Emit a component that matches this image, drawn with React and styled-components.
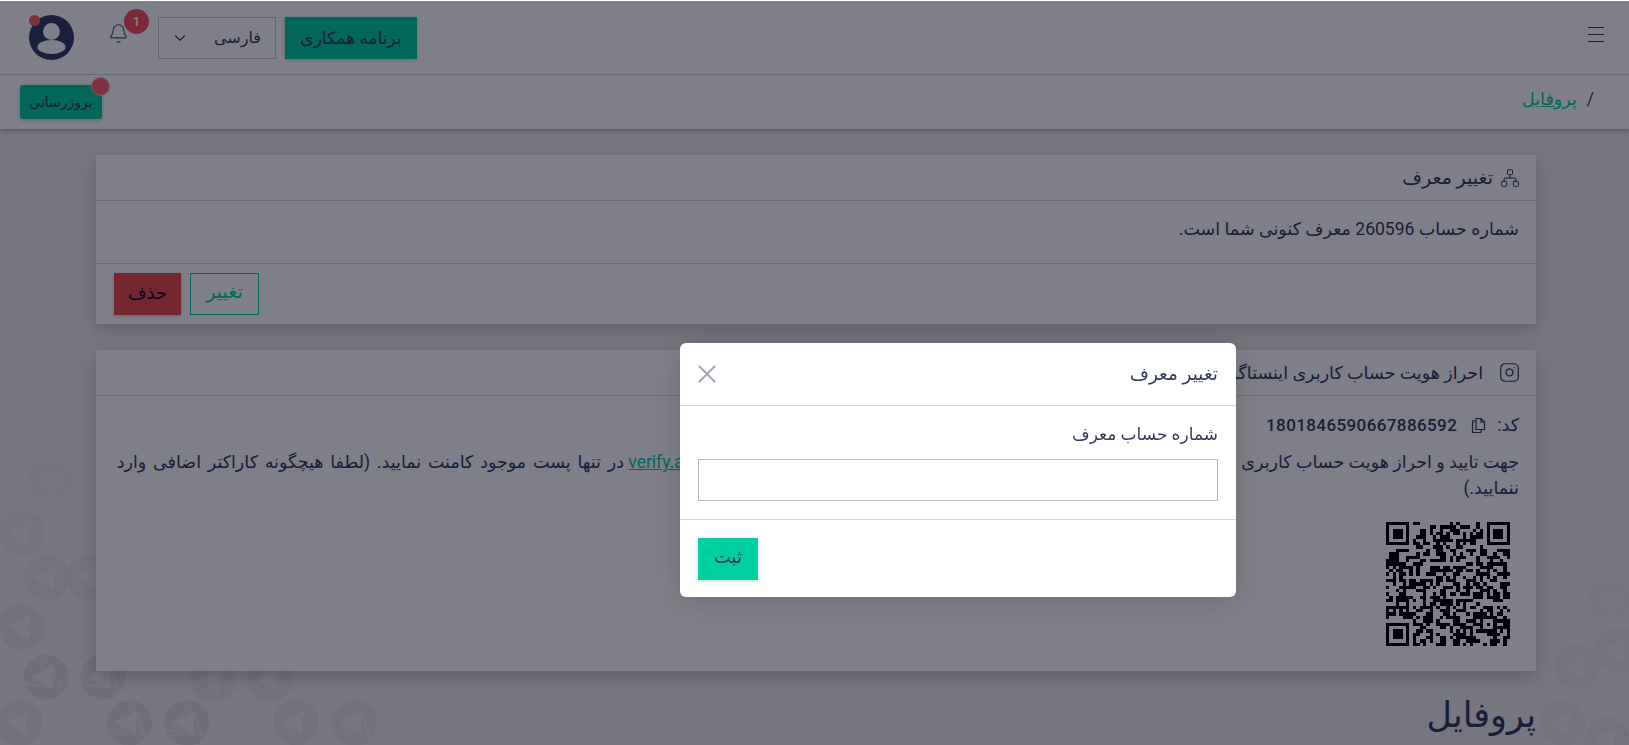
import React from 'react';
import styled, { createGlobalStyle } from 'styled-components';
import { Bell, ChevronDown, Instagram, Network, X } from 'lucide-react';

const GlobalStyle = createGlobalStyle`
  html, body {
    margin: 0;
    height: 745px;
    overflow: hidden;
    background: #ececec;
  }
  * { box-sizing: border-box; }
`

const Page = styled.div`
  position: relative;
  height: 745px;
  overflow: hidden;
  direction: rtl;
  font-family: Roboto, "DejaVu Sans", sans-serif;
  font-size: 17.5px;
  color: #343c5c;
`

const PatternArt = styled.svg`
  position: absolute;
  left: 0;
  top: 0;
`

const Header = styled.header`
  position: relative;
  display: flex;
  align-items: center;
  justify-content: space-between;
  height: 75px;
  padding: 1px 25px 0 29px;
  background: #fff;
  border-bottom: 1px solid #d8d8dc;
`

const MenuLines = styled.div`
  display: flex;
  flex-direction: column;
  gap: 6px;
  width: 16px;
  margin-bottom: 7px;

  span {
    height: 1px;
    background: #3a3f58;
  }
`

const HeaderTools = styled.div`
  display: flex;
  align-items: center;
`

const PrimaryButton = styled.button`
  position: relative;
  height: 42px;
  width: ${p => p.$width}px;
  padding: 0;
  border: 0;
  border-radius: ${p => p.$radius || 0}px;
  background: #00cf9f;
  color: #343c5c;
  font: inherit;
  font-size: ${p => p.$size || 17}px;
  box-shadow: 0 1px 4px rgba(0, 0, 0, .2);
`

const SubmitButton = styled(PrimaryButton)`
  padding-bottom: 5px;
`

const LangSelect = styled.div`
  display: flex;
  align-items: center;
  justify-content: space-between;
  width: 118px;
  height: 42px;
  margin-right: 9px;
  padding: 0 14px 0 12px;
  border: 1px solid #c9c9d2;
  background: #fff;
  color: #343c5c;
  font-size: 16px;
`

const BellWrap = styled.div`
  position: relative;
  width: 20px;
  height: 24px;
  margin: 0 29px 6px 35px;
  color: #4a4f68;
`

const BellBadge = styled.span`
  position: absolute;
  top: -14px;
  left: 15px;
  width: 25px;
  height: 25px;
  border-radius: 50%;
  background: #f55060;
  color: #fff;
  font: 500 13px/25px Roboto, sans-serif;
  text-align: center;
`

const AvatarWrap = styled.div`
  position: relative;
  width: 45px;
  height: 45px;
  margin-top: -1px;
`

const AvatarDot = styled.span`
  position: absolute;
  top: 0;
  left: 0;
  width: 11px;
  height: 11px;
  border-radius: 50%;
  background: #ff5c68;
`

const SubBar = styled.div`
  position: relative;
  display: flex;
  align-items: center;
  justify-content: space-between;
  height: 54px;
  padding: 0 35px 0 20px;
  background: #fff;
  box-shadow: 0 2px 4px rgba(0, 0, 0, .25);
`

const Crumbs = styled.div`
  display: flex;
  align-items: center;
  gap: 10px;
  margin-bottom: 6px;
  color: #3a3f58;
`

const GreenLink = styled.a`
  color: #00cf9f;
  text-decoration: underline;
`

const UpdateButton = styled(PrimaryButton)`
  height: 34px;
  font-size: 14px;
`

const UpdateDot = styled.span`
  position: absolute;
  top: -8px;
  right: -8px;
  width: 19px;
  height: 19px;
  border-radius: 50%;
  border: 1px solid #f3b4ba;
  background: #ff6070;
`

const Main = styled.main`
  position: relative;
  display: flex;
  flex-direction: column;
  gap: 26px;
  padding: 26px 93px 0 93px;
  margin-left: 3px;
`

const Card = styled.section`
  background: #fff;
  box-shadow: 0 6px 16px rgba(0, 0, 0, .18);
`

const CardHeader = styled.div`
  display: flex;
  align-items: center;
  gap: ${p => p.$gap}px;
  height: 46px;
  padding: 0 16px;
  border-bottom: 1px solid #d8d8dc;
  font-size: ${p => p.$size || 17.5}px;
  white-space: nowrap;
  overflow: hidden;
`

const CardBody = styled.div`
  padding: ${p => p.$padding};
`

const ReferrerNote = styled.div`
  height: 44px;
`

const CardFooter = styled.div`
  display: flex;
  justify-content: flex-end;
  gap: 9px;
  height: 61px;
  padding: 9px 18px 0;
  border-top: 1px solid #d8d8dc;
`

const DangerButton = styled(PrimaryButton)`
  padding-bottom: 4px;
  background: #ea4e4a;
  color: #0a1030;
`

const OutlineButton = styled(PrimaryButton)`
  padding-bottom: 5px;
  background: transparent;
  border: 1px solid #00cf9f;
  color: #00cf9f;
  box-shadow: none;
`

const CodeRow = styled.div`
  display: flex;
  align-items: center;
  gap: 11px;
  height: 24px;
  margin-top: 1px;
`

const CodeValue = styled.span`
  margin-right: 3px;
  font-family: Roboto, sans-serif;
  font-size: 17px;
  font-weight: 500;
  letter-spacing: .4px;
`

const Instruction = styled.p`
  margin: 12px 0 0;
  line-height: 26px;
`

const InstructionTail = styled.span`
  word-spacing: 2.4px;
`

const QrBox = styled.div`
  display: flex;
  margin: 21px 9px 0 0;
  height: 124px;
`

const PageTitle = styled.h1`
  margin: 0;
  font-size: 35px;
  font-weight: 400;
  line-height: 38px;
`

const Backdrop = styled.div`
  position: fixed;
  left: 0;
  right: 0;
  top: 1px;
  bottom: 0;
  direction: rtl;
  font-family: Roboto, "DejaVu Sans", sans-serif;
  font-size: 17px;
  color: #343c5c;
  background: rgba(0, 0, 20, .5);
`

const Modal = styled.div`
  width: 556px;
  height: 254px;
  margin: 342px 393px 0 0;
  background: #fff;
  border-radius: 6px;
  box-shadow: 0 4px 30px rgba(0, 0, 20, .15);
`

const ModalHeader = styled.div`
  display: flex;
  align-items: center;
  justify-content: space-between;
  height: 63px;
  padding: 0 18px 0 12px;
  border-bottom: 1px solid #d9dae0;
  font-size: 18.5px;
`

const CloseIcon = styled(X)`
  color: #a3a7b3;
`

const ModalBody = styled.div`
  height: 114px;
  padding: 18px 18px 0;
  border-bottom: 1px solid #d9dae0;
`

const FieldLabel = styled.label`
  display: block;
  height: 35px;
`

const TextField = styled.input`
  display: block;
  width: 100%;
  height: 42px;
  border: 1px solid #b4b8c6;
  background: #fff;
  outline: 0;
`

const ModalFooter = styled.div`
  display: flex;
  justify-content: flex-end;
  padding: 18px 18px 0;
`

const logos = [
  [22, 533, .3], [47, 578, .55], [89, 577, .5], [22, 627, .7], [46, 677, .9], [103, 677, .9],
  [213, 680, .6], [270, 680, .6], [20, 723, .7], [129, 723, 1], [187, 723, 1], [296, 723, .7],
  [354, 723, .6], [50, 480, .2], [1577, 667, .4], [1563, 723, .4], [1607, 740, .5], [1617, 650, .4], [1610, 600, .2],
];

function BackgroundPattern() {
  return (
    <PatternArt width="1629" height="745" viewBox="0 0 1629 745">
      <defs>
        <g id="swirl">
          {[0, 120, 240].map(r => (
            <path key={r} transform={`rotate(${r})`} d="M5.95 -22.2 A23 23 0 0 1 16.26 16.26 L6.5 -11.26 L-13 0 Z" />
          ))}
        </g>
      </defs>
      {logos.map(([x, y, o]) => (
        <use key={`${x}-${y}`} href="#swirl" x={x} y={y} fill="#dcdee3" stroke="#ececec" strokeWidth="1" opacity={o} />
      ))}
    </PatternArt>
  );
}

// not the real code, just a fake one with the same finder squares
function QrCode() {
  const size = 37;
  const cells = [];
  let seed = 260596;
  const inFinder = (x, y) => (x < 8 && y < 8) || (x > 28 && y < 8) || (x < 8 && y > 28);
  const inAlign = (x, y) => x >= 28 && x <= 32 && y >= 28 && y <= 32;
  for (let y = 0; y < size; y++) {
    for (let x = 0; x < size; x++) {
      seed = (seed * 1103515245 + 12345) & 0x7fffffff;
      if (!inFinder(x, y) && !inAlign(x, y) && (seed >> 16) % 100 < 52) {
        cells.push(<rect key={`${x}-${y}`} x={x} y={y} width="1" height="1" />);
      }
    }
  }
  const finder = (x, y) => (
    <g key={`f${x}-${y}`}>
      <path fillRule="evenodd" d={`M${x} ${y}h7v7h-7z M${x + 1} ${y + 1}v5h5v-5z`} />
      <rect x={x + 2} y={y + 2} width="3" height="3" />
    </g>
  );
  return (
    <svg width="124" height="124" viewBox="0 0 37 37" shapeRendering="crispEdges" fill="#000">
      {cells}
      {finder(0, 0)}
      {finder(30, 0)}
      {finder(0, 30)}
      <path fillRule="evenodd" d="M28 28h5v5h-5z M29 29v3h3v-3z" />
      <rect x="30" y="30" width="1" height="1" />
    </svg>
  );
}

function App() {
  return (
    <>
      <GlobalStyle />
      <Page>
        <BackgroundPattern />
        <Header>
          <MenuLines><span /><span /><span /></MenuLines>
          <HeaderTools>
            <PrimaryButton $width={132}>برنامه همکاری</PrimaryButton>
            <LangSelect>
              <span>فارسی</span>
              <ChevronDown size={18} strokeWidth={1.5} />
            </LangSelect>
            <BellWrap>
              <Bell size={21} strokeWidth={1.2} />
              <BellBadge>1</BellBadge>
            </BellWrap>
            <AvatarWrap>
              <svg width="45" height="45" viewBox="0 0 45 45">
                <circle cx="22.5" cy="22.5" r="22.5" fill="#343e66" />
                <circle cx="22.5" cy="16.5" r="8.5" fill="#fff" />
                <ellipse cx="22.5" cy="32" rx="14" ry="7" fill="#fff" />
              </svg>
              <AvatarDot />
            </AvatarWrap>
          </HeaderTools>
        </Header>
        <SubBar>
          <Crumbs>
            <span>/</span>
            <GreenLink href="#">پروفایل</GreenLink>
          </Crumbs>
          <UpdateButton $width={82} $radius={3}>
            بروزرسانی
            <UpdateDot />
          </UpdateButton>
        </SubBar>
        <Main>
          <Card>
            <CardHeader $gap={7} $size={19}>
              <Network size={20} strokeWidth={1.2} />
              <span>تغییر معرف</span>
            </CardHeader>
            <CardBody $padding="18px 17px 0">
              <ReferrerNote>شماره حساب 260596 معرف کنونی شما است.</ReferrerNote>
            </CardBody>
            <CardFooter>
              <OutlineButton $width={69} $size={19}>تغییر</OutlineButton>
              <DangerButton $width={67} $size={18}>حذف</DangerButton>
            </CardFooter>
          </Card>
          <Card>
            <CardHeader $gap={16}>
              <Instagram size={21} strokeWidth={1.4} />
              <span>احراز هویت حساب کاربری اینستاگرام</span>
            </CardHeader>
            <CardBody $padding="16px 17px 25px">
              <CodeRow>
                <span>کد:</span>
                <svg width="15" height="17" viewBox="0 0 15 17" fill="none" stroke="#343c5c" strokeWidth="1.2">
                  <path d="M5 1.5h5l3.5 3.5v7.5H5z M10 1.5v3.5h3.5 M5 4H1.5v11.5H10v-3" />
                </svg>
                <CodeValue>1801846590667886592</CodeValue>
              </CodeRow>
              <Instruction>
                جهت تایید و احراز هویت حساب کاربری اینستاگرام خود، از طریق همان حساب کاربری خود را لطفا به صفحه‌ی <GreenLink href="#">verify.account</GreenLink> <InstructionTail>در تنها پست موجود کامنت نمایید. (لطفا هیچگونه کاراکتر اضافی وارد ننمایید.)</InstructionTail>
              </Instruction>
              <QrBox><QrCode /></QrBox>
            </CardBody>
          </Card>
          <PageTitle>پروفایل</PageTitle>
        </Main>
      </Page>
      <Backdrop>
        <Modal>
          <ModalHeader>
            <span>تغییر معرف</span>
            <CloseIcon size={30} strokeWidth={1.6} />
          </ModalHeader>
          <ModalBody>
            <FieldLabel>شماره حساب معرف</FieldLabel>
            <TextField />
          </ModalBody>
          <ModalFooter>
            <SubmitButton $width={60} $size={18}>ثبت</SubmitButton>
          </ModalFooter>
        </Modal>
      </Backdrop>
    </>
  );
}

export default App;
